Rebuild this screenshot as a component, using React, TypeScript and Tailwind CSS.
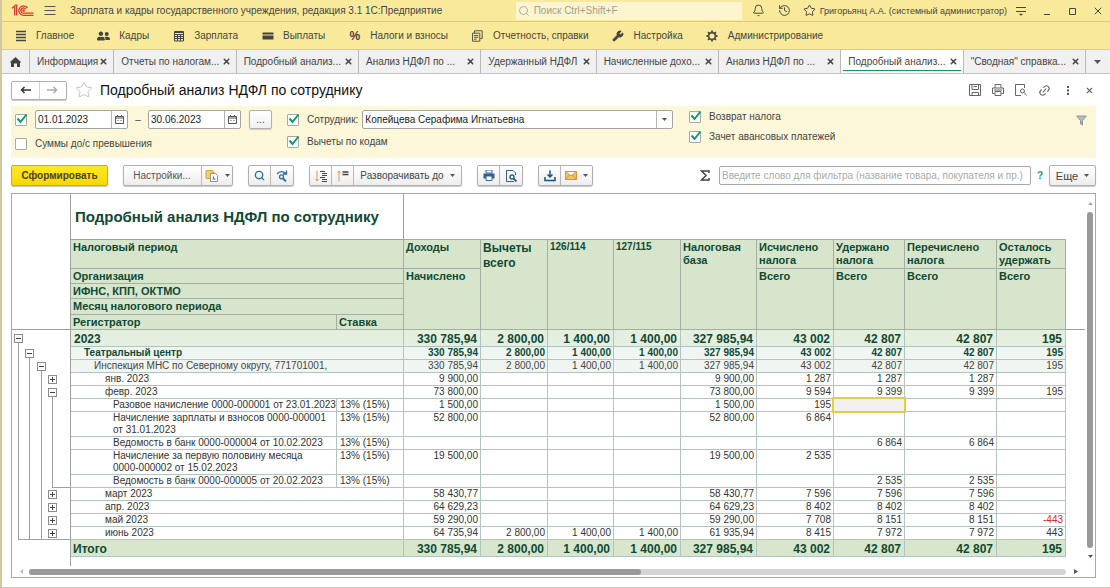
import React, { useState } from 'react';
import { Bell, History, Link2, Menu, Search, Star, Wrench, X } from 'lucide-react';
import { FaUserFriends } from 'react-icons/fa';

type RowKind = 'year' | 'org' | 'office' | 'month' | 'doc' | 'total';

interface ReportRow {
  kind: RowKind;
  label: string;
  rate?: string;
  tall?: boolean;
  values: string[];
  // tree column: one char per level, "|" line, "-" / "+" toggle
  tree: string;
  foot?: number;
}

const navItems = ['Главное', 'Кадры', 'Зарплата', 'Выплаты', 'Налоги и взносы', 'Отчетность, справки', 'Настройка', 'Администрирование'];

const tabs = [
  { title: 'Информация', width: 'w-[84px]' },
  { title: 'Отчеты по налогам...', width: 'w-[122px]' },
  { title: 'Подробный анализ...', width: 'w-[122px]' },
  { title: 'Анализ НДФЛ по ...', width: 'w-[122px]' },
  { title: 'Удержанный НДФЛ', width: 'w-[115px]' },
  { title: 'Начисленные дохо...', width: 'w-[122px]' },
  { title: 'Анализ НДФЛ по ...', width: 'w-[122px]' },
  { title: 'Подробный анализ...', width: 'w-[122px]' },
  { title: '"Сводная" справка...', width: 'w-[122px]' },
];

const rows: ReportRow[] = [
  { kind: 'year', label: '2023', tree: '-', values: ['330 785,94', '2 800,00', '1 400,00', '1 400,00', '327 985,94', '43 002', '42 807', '42 807', '195'] },
  { kind: 'org', label: 'Театральный центр', tree: '|-', values: ['330 785,94', '2 800,00', '1 400,00', '1 400,00', '327 985,94', '43 002', '42 807', '42 807', '195'] },
  { kind: 'office', label: 'Инспекция МНС по Северному округу, 771701001,', tree: '||-', values: ['330 785,94', '2 800,00', '1 400,00', '1 400,00', '327 985,94', '43 002', '42 807', '42 807', '195'] },
  { kind: 'month', label: 'янв. 2023', tree: '|||+', values: ['9 900,00', '', '', '', '9 900,00', '1 287', '1 287', '1 287', ''] },
  { kind: 'month', label: 'февр. 2023', tree: '|||-', values: ['73 800,00', '', '', '', '73 800,00', '9 594', '9 399', '9 399', '195'] },
  { kind: 'doc', label: 'Разовое начисление 0000-000001 от 23.01.2023', rate: '13% (15%)', tree: '||||', values: ['1 500,00', '', '', '', '1 500,00', '195', '', '', ''] },
  { kind: 'doc', label: 'Начисление зарплаты и взносов 0000-000001\nот 31.01.2023', rate: '13% (15%)', tall: true, tree: '||||', values: ['52 800,00', '', '', '', '52 800,00', '6 864', '', '', ''] },
  { kind: 'doc', label: 'Ведомость в банк 0000-000004 от 10.02.2023', rate: '13% (15%)', tree: '||||', values: ['', '', '', '', '', '', '6 864', '6 864', ''] },
  { kind: 'doc', label: 'Начисление за первую половину месяца\n0000-000002 от 15.02.2023', rate: '13% (15%)', tall: true, tree: '||||', values: ['19 500,00', '', '', '', '19 500,00', '2 535', '', '', ''] },
  { kind: 'doc', label: 'Ведомость в банк 0000-000005 от 20.02.2023', rate: '13% (15%)', tree: '||||', foot: 3, values: ['', '', '', '', '', '', '2 535', '2 535', ''] },
  { kind: 'month', label: 'март 2023', tree: '|||+', values: ['58 430,77', '', '', '', '58 430,77', '7 596', '7 596', '7 596', ''] },
  { kind: 'month', label: 'апр. 2023', tree: '|||+', values: ['64 629,23', '', '', '', '64 629,23', '8 402', '8 402', '8 402', ''] },
  { kind: 'month', label: 'май 2023', tree: '|||+', values: ['59 290,00', '', '', '', '59 290,00', '7 708', '8 151', '8 151', '-443'] },
  { kind: 'month', label: 'июнь 2023', tree: '|||+', foot: 0, values: ['64 735,94', '2 800,00', '1 400,00', '1 400,00', '61 935,94', '8 415', '7 972', '7 972', '443'] },
  { kind: 'total', label: 'Итого', tree: '', values: ['330 785,94', '2 800,00', '1 400,00', '1 400,00', '327 985,94', '43 002', '42 807', '42 807', '195'] },
];

const rowStyle: Record<RowKind, string> = {
  year: 'bg-[#e4efdf] text-[12px] font-bold text-[#0f4a35]',
  org: 'bg-[#eff5f0] text-[10px] font-bold text-[#0f4a35]',
  office: 'bg-[#f0f5f1] text-[10px] text-[#444]',
  month: 'bg-white text-[10px] text-[#333]',
  doc: 'bg-white text-[10px] text-[#333]',
  total: 'bg-[#d7e6cc] text-[12px] font-bold text-[#0f4a35]',
};

const indent: Record<RowKind, string> = {
  year: 'pl-[3px]',
  org: 'pl-[13px]',
  office: 'pl-[23px]',
  month: 'pl-[34px]',
  doc: 'pl-[42px]',
  total: 'pl-[2px]',
};

const rowHeight = (row: ReportRow) => {
  if (row.kind === 'year' || row.kind === 'total') return 'h-[17px]';
  return row.tall ? 'h-[25px]' : 'h-[13px]';
};

const Logo: React.FC = () => (
  <svg width="23" height="13" viewBox="0 0 23 13" fill="none" stroke="#d9382a" strokeWidth="1.3">
    <path d="M1 4.2 3.7 2v9.6M5.7 11.6V1.2L3.8 1.2" />
    <path d="M16.6 4.2A4.7 4.7 0 1 0 12.6 11.3H22.5" />
    <path d="M14.7 5.2A2.6 2.6 0 1 0 12.6 9.1H22.5" />
    <circle cx="12.6" cy="6.5" r=".7" />
  </svg>
);

const NavIcon: React.FC<{ index: number }> = ({ index }) => {
  switch (index) {
    case 0:
      return (
        <svg width="12" height="12" viewBox="0 0 12 12" stroke="#444" strokeWidth="1.5">
          <path d="M1 1.5h10M1 4.5h10M1 7.5h10M1 10.5h10" />
        </svg>
      );
    case 1:
      return <FaUserFriends size={14} color="#444" />;
    case 2:
      return (
        <svg width="12" height="12" viewBox="0 0 12 12" fill="none" stroke="#444">
          <path d="M1.5 1.5h9v9.5h-9zM1.5 2.5h9M1.5 4.5h9M1.5 6.5h9M1.5 8.5h9M4.5 4v7M7.5 4v7" />
        </svg>
      );
    case 3:
      return (
        <svg width="12" height="12" viewBox="0 0 12 12" fill="#444">
          <path d="M.5 2.5h11v2H.5zM.5 5.5h11v4H.5z" />
        </svg>
      );
    case 4:
      return <span className="text-[12px] font-bold">%</span>;
    case 5:
      return (
        <svg width="12" height="12" viewBox="0 0 12 12" fill="none" stroke="#555">
          <path d="M3.5 3V.8h7.7v7.7H9.3M1.5 3.2h7.3v8H1.5zM3 5.5h4.3M3 7.3h4.3M3 9.2h2.5" />
        </svg>
      );
    case 6:
      return <Wrench size={12} fill="#444" stroke="#444" strokeWidth={2} />;
    default:
      return (
        <svg width="12" height="12" viewBox="0 0 12 12" fill="none" stroke="#444">
          <circle cx="6" cy="6" r="3.3" strokeWidth="1.4" />
          <path d="M6 .5v2M6 9.500v2M.5 6h2M9.500 6h2M2.100 2.100l1.400 1.400M8.500 8.500l1.400 1.400M2.100 9.900l1.400-1.400M8.500 3.500l1.400-1.400" strokeWidth="1.8" />
        </svg>
      );
  }
};

const CheckBox: React.FC<{ id: string; label?: string; initial?: boolean }> = ({ id, label, initial = true }) => {
  const [checked, setChecked] = useState(initial);
  return (
    <div className="flex items-center gap-2">
      <span className="relative flex h-3 w-3 shrink-0">
        <input
          id={id}
          type="checkbox"
          aria-label={label ?? 'Период'}
          checked={checked}
          onChange={e => setChecked(e.target.checked)}
          className="h-3 w-3 appearance-none rounded-[1px] border border-[#a9a9a0] bg-white"
        />
        {checked && (
          <svg className="pointer-events-none absolute -top-px left-px" width="12" height="12" viewBox="0 0 12 12" fill="none" stroke="#12976b" strokeWidth="2">
            <path d="M1.5 5.5 4.5 9 10.5 1.5" />
          </svg>
        )}
      </span>
      {label && <label htmlFor={id} className="whitespace-nowrap">{label}</label>}
    </div>
  );
};

const DateField: React.FC<{ label: string; initial: string }> = ({ label, initial }) => {
  const [value, setValue] = useState(initial);
  return (
    <div className="flex h-[19px] w-[93px] rounded-[2px] border border-[#a5a5a0] bg-white">
      <input aria-label={label} value={value} onChange={e => setValue(e.target.value)} className="w-0 min-w-0 flex-1 pl-[2px] text-[#222] outline-none" />
      <button aria-label="Выбрать дату" className="flex w-4 items-center justify-center border-l border-[#b5b5b0]">
        <svg width="9" height="9" viewBox="0 0 9 9" fill="none" stroke="#555">
          <path d="M.5 1.5h8v7h-8zM.5 3h8M2.5 0v2M6.5 0v2M2.5 5.5h1M5.5 5.5h1" />
        </svg>
      </button>
    </div>
  );
};

const Caret: React.FC = () => (
  <svg width="5" height="3" viewBox="0 0 5 3" fill="#555">
    <path d="M0 0h5L2.5 3z" />
  </svg>
);

const group = 'flex h-[21px] shrink-0 divide-x divide-[#b8b8b8] rounded-[2px] border border-[#b0b0b0] bg-linear-to-b from-white to-[#ededed] shadow-[0_1px_1px_#c8c8c8]';
const iconButton = 'flex w-[22px] items-center justify-center';

const Toolbar: React.FC = () => (
  <div className="mt-[7px] flex items-center pr-[14px] pl-[9px]">
    <button className="h-[21px] w-[97px] shrink-0 rounded-[2px] border border-[#c9b100] bg-linear-to-b from-[#ffe825] to-[#f5d800] font-bold text-[#4a4320] shadow-[0_1px_1px_#c8c8c8]">
      Сформировать
    </button>
    <div className={`${group} ml-[15px]`}>
      <button className="w-[78px] pr-px text-[#555]">Настройки...</button>
      <button aria-label="Варианты отчета" className="flex w-[30px] items-center justify-center gap-1.5">
        <svg width="14" height="13" viewBox="0 0 14 13" fill="none">
          <path d="M1 1.5h7v2h1v6H1z" fill="#f0cf70" stroke="#d6a640" />
          <path d="M5.5 4.5h5l2 2v6h-7z" fill="#fff" stroke="#8a8f98" />
          <path d="M8.5 7.5v2M7.5 10h3" stroke="#557" />
        </svg>
        <Caret />
      </button>
    </div>
    <div className={`${group} ml-[15px]`}>
      <button aria-label="Найти" className={iconButton}>
        <Search size={11} stroke="#2b6c9a" strokeWidth={3} />
      </button>
      <button aria-label="Найти далее" className={iconButton}>
        <svg width="12" height="12" viewBox="0 0 12 12" fill="none" stroke="#2b6c9a" strokeWidth="1.3">
          <path d="M1 4Q5-.5 10 3.5M10.5.5V4H7" />
          <circle cx="5.5" cy="6.8" r="2" />
          <path d="m7 8.5 3 3" strokeWidth="1.8" />
        </svg>
      </button>
    </div>
    <div className={`${group} ml-[15px]`}>
      <button aria-label="Развернуть группы" className={iconButton}>
        <svg width="12" height="12" viewBox="0 0 12 12" fill="none" stroke="#444">
          <path d="M2 .5V11M.5 9 2 11 3.5 9" stroke="#e0975c" />
          <path d="M5 1.5h5M7 3.5h5M7 5.5h5M5 7.5h5M7 9.5h5M7 11.5h5" />
        </svg>
      </button>
      <button aria-label="Свернуть группы" className={iconButton}>
        <svg width="12" height="12" viewBox="0 0 12 12" fill="none" stroke="#444">
          <path d="M2 11.5V1M.5 3 2 1l1.5 2" stroke="#e0975c" />
          <path d="M5.5 2h6M5.5 4.5h6" strokeWidth="1.3" />
        </svg>
      </button>
      <button className="flex w-[107px] items-center justify-center gap-1.5 text-[#444]">
        Разворачивать до <Caret />
      </button>
    </div>
    <div className={`${group} ml-[15px]`}>
      <button aria-label="Печать" className={iconButton}>
        <svg width="12" height="11" viewBox="0 0 12 11">
          <path d="M3 0h6v3H3z" fill="#fff" stroke="#38668f" />
          <path d="M.5 3.5h11v5H.5z" fill="#2f5f8c" />
          <path d="M3 6h6v4.5H3z" fill="#fff" stroke="#38668f" />
        </svg>
      </button>
      <button aria-label="Просмотр" className={iconButton}>
        <svg width="12" height="12" viewBox="0 0 12 12" fill="none" stroke="#2f5f8c">
          <path d="M8 .5H1.5v11H9M8 .5l2.5 2.5V5" />
          <circle cx="7" cy="7" r="2" strokeWidth="1.5" fill="#fff" />
          <path d="m8.5 8.5 3 3" strokeWidth="1.8" />
        </svg>
      </button>
    </div>
    <div className={`${group} ml-[15px]`}>
      <button aria-label="Сохранить" className={iconButton}>
        <svg width="12" height="12" viewBox="0 0 12 12" fill="none" stroke="#1f4f80" strokeWidth="1.5">
          <path d="M6 .5v6M3.5 4.5 6 7l2.5-2.5M1 7v3.5h10V7" />
        </svg>
      </button>
      <button aria-label="Отправить" className="flex w-[31px] items-center justify-center gap-1.5">
        <svg width="12" height="9" viewBox="0 0 12 9" fill="#f6c35c" stroke="#d9962f">
          <path d="M.5.5h11v8H.5zM.5.5 6 5 11.5.5M.5 8.5l4-4.5M11.5 8.5l-4-4.5" />
        </svg>
        <Caret />
      </button>
    </div>
    <svg className="ml-auto shrink-0" width="10" height="11" viewBox="0 0 10 11" fill="none" stroke="#444" strokeWidth="1.5">
      <path d="M9 3V1H1.5L6 5.5 1.5 10H9V8" />
    </svg>
    <input
      aria-label="Фильтр"
      placeholder="Введите слово для фильтра (название товара, покупателя и пр.)"
      className="ml-[9px] h-[19px] w-[312px] rounded-[2px] border border-[#a8a8a8] bg-white px-[2px] outline-none placeholder:text-[#aaa]"
    />
    <button className="w-[18px] font-bold text-[#2492a8]">?</button>
    <button className="flex h-[21px] w-[47px] shrink-0 items-center justify-center gap-1.5 rounded-[2px] border border-[#b0b0b0] bg-linear-to-b from-white to-[#ededed] text-[11px] text-[#444] shadow-[0_1px_1px_#c8c8c8]">
      Еще <Caret />
    </button>
  </div>
);

const head = 'border-r border-b border-[#a3afa0] px-[2px] pt-px align-top text-left font-bold';

const TreeRow: React.FC<{ row: ReportRow }> = ({ row }) => (
  <div className={`relative flex pl-px ${rowHeight(row)}`}>
    {row.tree.split('').map((mark, i) => (
      <div key={i} className={`flex flex-col items-center ${i === 2 ? 'w-[12px]' : 'w-[11px]'}`}>
        {mark !== '|' && (
          <button
            aria-label={mark === '+' ? 'Развернуть' : 'Свернуть'}
            className={`flex h-[9px] w-[9px] shrink-0 items-center justify-center border border-[#8c8c8c] bg-white ${row.kind === 'year' ? 'mt-1' : 'mt-[2px]'}`}
          >
            <svg width="7" height="7" viewBox="0 0 7 7" stroke="#444">
              <path d={mark === '+' ? 'M1 3.5h5M3.5 1v5' : 'M1 3.5h5'} />
            </svg>
          </button>
        )}
        {mark !== '+' && <span className="w-px flex-1 bg-[#a0a0a0]" />}
      </div>
    ))}
    {row.foot !== undefined && (
      <span className={`absolute right-0 bottom-0 h-px bg-[#a0a0a0] ${row.foot === 0 ? 'left-[6px]' : 'left-[40px]'}`} />
    )}
  </div>
);

const Report: React.FC = () => (
  <div className="mt-[7px] mr-[14px] mb-[9px] ml-[9px] flex flex-1 flex-col border border-[#a8a8a8]">
    <div className="flex flex-1">
      <div className="w-[59px] shrink-0 border-r border-[#a0a0a0]">
        <div className="h-[136px] border-b border-[#a0a0a0]" />
        {rows.map((row, i) => <TreeRow key={i} row={row} />)}
      </div>

      <div className="min-w-0 flex-1 overflow-hidden pb-[9px]">
        <table className="w-full table-fixed border-separate border-spacing-0 leading-3">
          <colgroup>
            <col className="w-[266px]" />
            <col className="w-[67px]" />
            <col className="w-[77px]" />
            <col className="w-[67px]" />
            <col className="w-[66px]" />
            <col className="w-[67px]" />
            <col className="w-[76px]" />
            <col className="w-[77px]" />
            <col className="w-[71px]" />
            <col className="w-[92px]" />
            <col className="w-[69px]" />
            <col />
          </colgroup>
          <thead className="text-[11px] text-[#0f4a35]">
            <tr className="h-[46px]">
              <th colSpan={2} className="border-r border-b border-[#a0a0a0] pl-1 text-left text-[15px] font-bold whitespace-nowrap">
                Подробный анализ НДФЛ по сотруднику
              </th>
              <td colSpan={9} className="border-b border-[#a3afa0]" />
              <td rowSpan={6} className="border-b border-[#a0a0a0]" />
            </tr>
            <tr className="h-[29px] bg-[#d8e5cd]">
              <th colSpan={2} className={`${head} pt-[3px]`}>Налоговый период</th>
              <th className={`${head} pt-[3px]`}>Доходы</th>
              <th rowSpan={5} className={`${head} pt-[3px] text-[12px] leading-[15px]`}>Вычеты всего</th>
              <th rowSpan={5} className={`${head} pt-[3px] text-[10px]`}>126/114</th>
              <th rowSpan={5} className={`${head} pt-[3px] text-[10px]`}>127/115</th>
              <th rowSpan={5} className={`${head} pt-[3px] leading-[13px]`}>Налоговая база</th>
              <th className={`${head} leading-[13px]`}>Исчислено налога</th>
              <th className={`${head} leading-[13px]`}>Удержано налога</th>
              <th className={`${head} leading-[13px]`}>Перечислено налога</th>
              <th className={`${head} leading-[13px]`}>Осталось удержать</th>
            </tr>
            <tr className="h-[15px] bg-[#d8e5cd]">
              <th colSpan={2} className={head}>Организация</th>
              <th rowSpan={4} className={head}>Начислено</th>
              <th rowSpan={4} className={head}>Всего</th>
              <th rowSpan={4} className={head}>Всего</th>
              <th rowSpan={4} className={head}>Всего</th>
              <th rowSpan={4} className={head}>Всего</th>
            </tr>
            <tr className="h-[15px] bg-[#d8e5cd]">
              <th colSpan={2} className={head}>ИФНС, КПП, ОКТМО</th>
            </tr>
            <tr className="h-[16px] bg-[#d8e5cd]">
              <th colSpan={2} className={head}>Месяц налогового периода</th>
            </tr>
            <tr className="h-[15px] bg-[#d8e5cd]">
              <th className={head}>Регистратор</th>
              <th className={head}>Ставка</th>
            </tr>
          </thead>
          <tbody>
            {rows.map((row, i) => (
              <tr key={i} className={`${rowHeight(row)} ${rowStyle[row.kind]}`}>
                <td
                  colSpan={row.rate ? 1 : 2}
                  className={`border-r border-b border-[#b3c4bf] align-top whitespace-pre ${indent[row.kind]} ${row.kind === 'year' || row.kind === 'total' ? 'pt-[3px]' : ''}`}
                >
                  {row.label}
                </td>
                {row.rate && <td className="border-r border-b border-[#b3c4bf] pl-[3px] align-top">{row.rate}</td>}
                {row.values.map((value, col) => (
                  <td
                    key={col}
                    className={`relative border-r border-b border-[#b3c4bf] text-right align-top whitespace-nowrap ${value.startsWith('-') ? 'text-[#d9232e]' : ''} ${row.kind === 'year' || row.kind === 'total' ? 'pt-[3px] pr-[3px]' : 'pr-[2px]'}`}
                  >
                    {value}
                    {i === 5 && col === 6 && (
                      <span className="absolute -inset-[2px] border-2 border-[#e2cf45] bg-[#f0f0ef]" />
                    )}
                  </td>
                ))}
              </tr>
            ))}
          </tbody>
        </table>
      </div>

      <div className="flex w-[10px] shrink-0 flex-col items-center pt-2 pb-2">
        <svg width="5" height="3" viewBox="0 0 5 3" fill="#aaa"><path d="M0 3h5L2.5 0z" /></svg>
        <span className="my-[7px] w-1.5 flex-1 rounded-full bg-[#999]" />
        <Caret />
      </div>
    </div>

    <div className="flex h-[11px] items-center pr-[17px] pl-2">
      <svg width="3" height="5" viewBox="0 0 3 5" fill="#bbb"><path d="M3 0v5L0 2.5z" /></svg>
      <span className="mr-2 ml-1.5 h-1.5 flex-1 rounded-full bg-[#d4d4d4]">
        <span className="block h-1.5 w-[59%] rounded-full bg-[#999]" />
      </span>
      <svg width="4" height="5" viewBox="0 0 4 5" fill="#555"><path d="M0 0v5l4-2.5z" /></svg>
    </div>
  </div>
);

const App: React.FC = () => {
  const [activeTab, setActiveTab] = useState(7);
  const [employee, setEmployee] = useState('Копейцева Серафима Игнатьевна');

  return (
    <div className="flex min-h-screen flex-col overflow-hidden border-b border-l-2 border-[#cfc8a0] bg-white font-['Liberation_Sans',Arial,sans-serif] text-[10px] leading-3 text-[#444]">
      {/* Window title */}
      <header className="flex h-[22px] items-center border-b border-[#dccb7c] bg-[#f9ea9b] pr-[6px] pl-[9px]">
        <Logo />
        <button aria-label="Меню" className="ml-2.5">
          <svg width="12" height="11" viewBox="0 0 12 11" stroke="#555"><path d="M.5 1.5h11M.5 5.5h11M.5 9.5h11" /></svg>
        </button>
        <span className="ml-3.5 whitespace-nowrap">Зарплата и кадры государственного учреждения, редакция 3.1 1С:Предприятие</span>
        <div className="ml-auto flex h-[18px] w-[226px] items-center gap-1 bg-[#fdf5cf] pl-0.5">
          <Search size={12} stroke="#999" strokeWidth={1.5} />
          <input aria-label="Поиск" placeholder="Поиск Ctrl+Shift+F" className="min-w-0 flex-1 outline-none placeholder:text-[#a39f8a]" />
        </div>
        <button aria-label="Уведомления" className="ml-2.5"><Bell size={13} strokeWidth={1.8} /></button>
        <button aria-label="История" className="ml-[13px]"><History size={13} strokeWidth={1.8} /></button>
        <button aria-label="Избранное" className="ml-3"><Star size={13} strokeWidth={1.8} /></button>
        <span className="ml-1 text-[9px] whitespace-nowrap">Григорьянц А.А. (системный администратор)</span>
        <button aria-label="Настройки окна" className="ml-2">
          <svg width="12" height="12" viewBox="0 0 12 12" stroke="#444" fill="#444"><path d="M1 2.5h10M1 6.5h10" /><path d="M4.5 9h3L6 10.5z" strokeWidth=".5" /></svg>
        </button>
        <button aria-label="Свернуть" className="ml-4">
          <svg width="8" height="10" viewBox="0 0 8 10" stroke="#444"><path d="M1 8.5h6" /></svg>
        </button>
        <button aria-label="Развернуть" className="ml-[17px]">
          <svg width="8" height="8" viewBox="0 0 8 8" fill="none" stroke="#444"><path d="M1.5 1.5h6v6h-6z" /></svg>
        </button>
        <button aria-label="Закрыть" className="ml-4"><X size={12} strokeWidth={2} /></button>
      </header>

      {/* Sections */}
      <nav className="flex h-7 items-center gap-[23px] border-b border-[#dccb7c] bg-[#f9ea9b] pl-3">
        {navItems.map((item, i) => (
          <button key={item} className="flex items-center gap-[9px] whitespace-nowrap">
            <span className="flex w-[13px] justify-center"><NavIcon index={i} /></span>
            {item}
          </button>
        ))}
      </nav>

      {/* Open windows */}
      <div className="flex h-6 border-b border-[#c3c3c3] bg-[#f0f0f0]">
        <button aria-label="Начальная страница" className="flex w-7 shrink-0 items-center justify-center border-r border-[#b9b9b9]">
          <svg width="11" height="10" viewBox="0 0 11 10" fill="#444"><path d="M5.5 0 11 5l-1 1v4H7V6.5H4V10H1V6L0 5z" /></svg>
        </button>
        {tabs.map((tab, i) => (
          <div key={i} className={`relative flex min-w-0 grow items-center justify-between border-r border-[#b9b9b9] pr-[5px] pl-[7px] ${tab.width} ${i === activeTab ? 'bg-white' : ''}`}>
            <button onClick={() => setActiveTab(i)} className="whitespace-nowrap">{tab.title}</button>
            <button aria-label="Закрыть вкладку"><X size={9} strokeWidth={4} /></button>
            {i === activeTab && <span className="absolute right-0.5 bottom-0.5 left-0.5 h-px bg-[#15955d]" />}
          </div>
        ))}
        <button aria-label="Список вкладок" className="flex w-6 shrink-0 items-center justify-center">
          <svg width="7" height="4" viewBox="0 0 7 4" fill="#555"><path d="M0 0h7L3.5 4z" /></svg>
        </button>
      </div>

      {/* Page title */}
      <div className="flex h-8 items-center pr-4 pl-[9px]">
        <div className="flex h-[19px] w-14 shrink-0 divide-x divide-[#d0d0d0] rounded-[2px] border border-[#b0b0b0] shadow-[0_1px_1px_#c8c8c8]">
          <button aria-label="Назад" className="flex flex-1 items-center justify-center">
            <svg width="11" height="8" viewBox="0 0 11 8" fill="none" stroke="#333" strokeWidth="1.5"><path d="M11 4H1.5M4.5 1l-3 3 3 3" /></svg>
          </button>
          <button aria-label="Вперед" className="flex flex-1 items-center justify-center">
            <svg width="11" height="8" viewBox="0 0 11 8" fill="none" stroke="#aaa" strokeWidth="1.5"><path d="M0 4h9.5M6.5 1l3 3-3 3" /></svg>
          </button>
        </div>
        <button aria-label="В избранное" className="ml-2"><Star size={18} stroke="#bbb" strokeWidth={1.2} /></button>
        <h1 className="ml-[7px] text-[14px] leading-4 whitespace-nowrap text-[#111]">Подробный анализ НДФЛ по сотруднику</h1>
        <div className="ml-auto flex items-center gap-[11px]">
          <button aria-label="Сохранить">
            <svg width="12" height="12" viewBox="0 0 12 12" fill="none" stroke="#666"><path d="M.5.5h11v11h-11zM3 .5v5h6.5v-5M4.5 2.5h3.500M3 11.5v-3h6.5v3" /></svg>
          </button>
          <button aria-label="Печать">
            <svg width="12" height="12" viewBox="0 0 12 12" fill="none" stroke="#666"><path d="M3 4V.5h6V4M2.5 9.5h-2V4h11v5.5h-2M3 7.5h6v4H3zM2 6h8" /></svg>
          </button>
          <button aria-label="Просмотр">
            <svg width="12" height="12" viewBox="0 0 12 12" fill="none" stroke="#666"><path d="M9.5 4V.5H.5v11H6" /><circle cx="7.5" cy="7" r="2" /><path d="m9 8.5 2.5 3" /></svg>
          </button>
          <button aria-label="Ссылка"><Link2 size={13} stroke="#666" className="-rotate-45" /></button>
          <button aria-label="Еще" className="flex w-3 justify-center">
            <svg width="2" height="9" viewBox="0 0 2 9" fill="#555"><path d="M0 0h2v2H0zM0 3.5h2v2H0zM0 7h2v2H0z" /></svg>
          </button>
          <button aria-label="Закрыть"><X size={9} stroke="#666" strokeWidth={3} /></button>
        </div>
      </div>

      {/* Report filters */}
      <section className="mr-[14px] ml-[9px] flex h-[52px] bg-[#fdf7d9] pr-[9px] pl-1">
        <div className="w-[272px] shrink-0">
          <div className="mt-[4px] flex h-[19px] items-center">
            <CheckBox id="period" />
            <div className="ml-2"><DateField label="Начало периода" initial="01.01.2023" /></div>
            <span className="w-[20px] text-center">–</span>
            <DateField label="Конец периода" initial="30.06.2023" />
            <button className="ml-2 h-[19px] w-[23px] rounded-[2px] border border-[#b0b0b0] bg-linear-to-b from-white to-[#f0f0f0] shadow-[0_1px_1px_#c8c8c8]">...</button>
          </div>
          <div className="mt-[9px]"><CheckBox id="excess" label="Суммы до/с превышения" initial={false} /></div>
        </div>
        <div className="w-[402px] shrink-0">
          <div className="mt-1 flex h-[19px] items-center">
            <CheckBox id="employee" label="Сотрудник:" />
            <div className="mr-4 ml-1 flex h-[19px] min-w-0 flex-1 rounded-[2px] border border-[#a5a5a0] bg-white">
              <input aria-label="Сотрудник" value={employee} onChange={e => setEmployee(e.target.value)} className="min-w-0 flex-1 pl-[2px] text-[#222] outline-none" />
              <button aria-label="Выбрать" className="flex w-4 items-center justify-center border-l border-[#b5b5b0]"><Caret /></button>
            </div>
          </div>
          <div className="mt-[7px]"><CheckBox id="deductions" label="Вычеты по кодам" /></div>
        </div>
        <div className="flex flex-1 flex-col gap-2 pt-[5px]">
          <CheckBox id="refund" label="Возврат налога" />
          <CheckBox id="advance" label="Зачет авансовых платежей" />
        </div>
        <button aria-label="Отбор" className="mt-2 h-3">
          <svg width="11" height="11" viewBox="0 0 11 11" fill="#b5bcc0" stroke="#8b979d"><path d="M.7 1h9.6L6.500 5.500V10l-2-1V5.500z" /></svg>
        </button>
      </section>

      <Toolbar />
      <Report />
    </div>
  );
};

export default App;
